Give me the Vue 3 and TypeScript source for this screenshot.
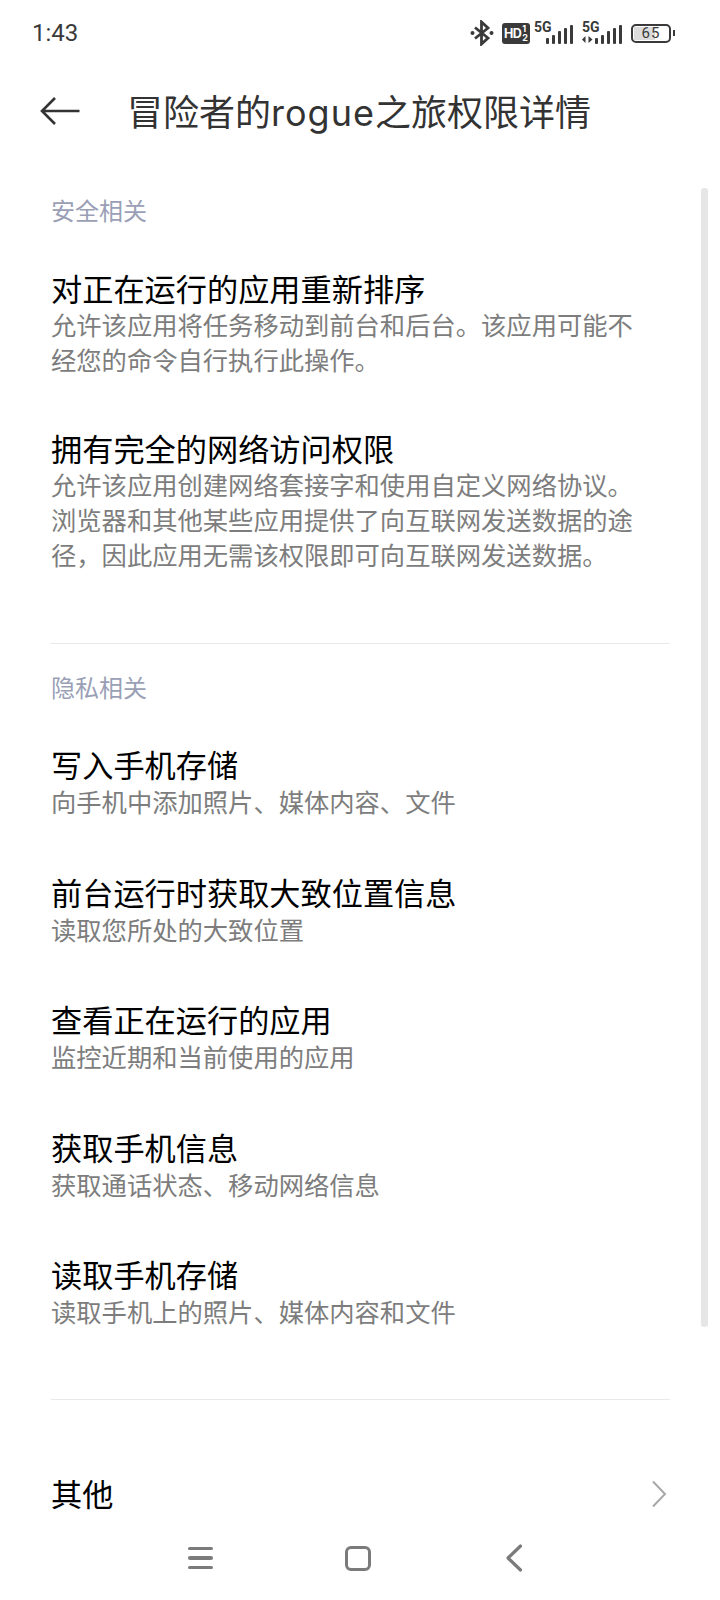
<script setup lang="ts">
interface Perm {
  title: string
  lines: string[]
}

const security: Perm[] = [
  {
    title: '对正在运行的应用重新排序',
    lines: ['允许该应用将任务移动到前台和后台。该应用可能不', '经您的命令自行执行此操作。']
  },
  {
    title: '拥有完全的网络访问权限',
    lines: [
      '允许该应用创建网络套接字和使用自定义网络协议。',
      '浏览器和其他某些应用提供了向互联网发送数据的途',
      '径，因此应用无需该权限即可向互联网发送数据。'
    ]
  }
]

const privacy: Perm[] = [
  { title: '写入手机存储', lines: ['向手机中添加照片、媒体内容、文件'] },
  { title: '前台运行时获取大致位置信息', lines: ['读取您所处的大致位置'] },
  { title: '查看正在运行的应用', lines: ['监控近期和当前使用的应用'] },
  { title: '获取手机信息', lines: ['获取通话状态、移动网络信息'] },
  { title: '读取手机存储', lines: ['读取手机上的照片、媒体内容和文件'] }
]

const bars = [6, 9, 13, 16, 19]
</script>

<template>
  <div class="page">
    <div class="status">
      <span class="time">1:43</span>
      <div class="status-icons">
        <svg class="bt" width="24" height="26" viewBox="0 0 24 26" fill="none" stroke="#3a3a3a" stroke-width="2.8">
          <path d="M5 7.5 L18 18 L11.5 24 V2 L18 8 L5 18.5" />
          <circle cx="2.5" cy="13" r="2" fill="#3a3a3a" stroke="none" />
          <circle cx="21.5" cy="13" r="2" fill="#3a3a3a" stroke="none" />
        </svg>
        <div class="hd">
          <span class="hd-text">HD</span>
          <span class="hd-sub"><i>1</i><i>2</i></span>
        </div>
        <div class="net">
          <span class="five">5G</span>
          <div class="signal">
            <i v-for="h in bars" :key="h" :style="{ height: h + 'px' }"></i>
          </div>
        </div>
        <div class="net second">
          <span class="five">5G</span>
          <svg class="arrows" width="11" height="7" viewBox="0 0 11 7" fill="#3a3a3a">
            <path d="M0 3.5 L3.5 0 V7 Z M6.5 0 L10.5 3.5 L6.5 7 Z" />
          </svg>
          <div class="signal">
            <i v-for="h in bars" :key="h" :style="{ height: h + 'px' }"></i>
          </div>
        </div>
        <div class="battery">
          <div class="battery-body">
            <span class="battery-fill"></span>
            <span class="battery-num">65</span>
          </div>
          <span class="battery-nub"></span>
        </div>
      </div>
    </div>

    <div class="header">
      <svg class="back" width="40" height="30" viewBox="0 0 40 30" fill="none" stroke="#333" stroke-width="2.6">
        <path d="M39.5 15 H2.5 M15 2 L2 15 L15 28" />
      </svg>
      <h1 class="title">冒险者的<span class="latin">rogue</span>之旅权限详情</h1>
    </div>

    <div class="content">
      <section class="group first">
        <div class="label">安全相关</div>
        <div v-for="p in security" :key="p.title" class="perm">
          <div class="perm-title">{{ p.title }}</div>
          <div v-for="l in p.lines" :key="l" class="perm-desc">{{ l }}</div>
        </div>
      </section>

      <div class="divider one"></div>

      <section class="group">
        <div class="label">隐私相关</div>
        <div v-for="p in privacy" :key="p.title" class="perm">
          <div class="perm-title">{{ p.title }}</div>
          <div v-for="l in p.lines" :key="l" class="perm-desc">{{ l }}</div>
        </div>
      </section>

      <div class="divider two"></div>

      <div class="other">
        <span class="perm-title">其他</span>
        <svg width="16" height="28" viewBox="0 0 16 28" fill="none" stroke="#a8a8a8" stroke-width="2">
          <path d="M2 1.5 L14 14 L2 26.5" />
        </svg>
      </div>
    </div>

    <div class="scrollbar"></div>

    <div class="navbar">
      <div class="nav-menu"><i></i><i></i><i></i></div>
      <div class="nav-home"></div>
      <svg width="18" height="28" viewBox="0 0 18 28" fill="none" stroke="#7b7b7b" stroke-width="3.2" stroke-linecap="round" stroke-linejoin="round">
        <path d="M15.5 2 L3 14 L15.5 26" />
      </svg>
    </div>
  </div>
</template>

<style scoped>
.page {
  position: relative;
  width: 720px;
  height: 1600px;
  overflow: hidden;
  background: #fff;
  display: flex;
  flex-direction: column;
  font-family: Roboto, "Noto Sans CJK SC", sans-serif;
}

.status {
  height: 66px;
  flex: none;
  display: flex;
  align-items: center;
  justify-content: space-between;
  padding: 0 45px 0 32px;
  color: #3a3a3a;
}
.time {
  font-family: Roboto, sans-serif;
  font-size: 24px;
  font-weight: 400;
}
.status-icons {
  display: flex;
  align-items: center;
}
.bt {
  margin-right: 8px;
}
.hd {
  width: 28px;
  height: 21px;
  border-radius: 3px;
  background: #3a3a3a;
  color: #fff;
  display: flex;
  align-items: center;
  justify-content: center;
  margin-right: 4px;
  font-family: Inter, sans-serif;
  font-weight: 700;
}
.hd-text {
  font-size: 12.5px;
  letter-spacing: -0.5px;
}
.hd-sub {
  display: flex;
  flex-direction: column;
  font-size: 9px;
  line-height: 9px;
  margin-left: 1px;
}
.hd-sub i {
  font-style: normal;
}
.net {
  position: relative;
  width: 39px;
  height: 22px;
  display: flex;
  justify-content: flex-end;
  align-items: flex-end;
  margin-right: 9px;
}
.net.second {
  width: 40px;
}
.five {
  position: absolute;
  left: 0;
  top: -1px;
  font-family: Roboto, sans-serif;
  font-size: 14px;
  line-height: 13px;
  font-weight: 700;
}
.arrows {
  position: absolute;
  left: 0;
  bottom: 1px;
}
.signal {
  display: flex;
  align-items: flex-end;
  gap: 2.5px;
}
.signal i {
  display: block;
  width: 3.5px;
  background: #3a3a3a;
  border-radius: 1px;
}
.battery {
  display: flex;
  align-items: center;
  gap: 2px;
}
.battery-body {
  position: relative;
  width: 40px;
  height: 19px;
  box-sizing: border-box;
  border: 2px solid #3a3a3a;
  border-radius: 5px;
  overflow: hidden;
  display: flex;
  align-items: center;
  justify-content: center;
}
.battery-fill {
  position: absolute;
  left: 1px;
  top: 1px;
  bottom: 1px;
  width: 21px;
  background: #dcdcdc;
}
.battery-num {
  position: relative;
  font-family: Roboto, sans-serif;
  font-size: 15px;
  line-height: 14px;
  letter-spacing: 1px;
  color: #3a3a3a;
}
.battery-nub {
  width: 2px;
  height: 6px;
  background: #3a3a3a;
}

.header {
  flex: none;
  height: 90px;
  display: flex;
  align-items: center;
  padding-left: 40px;
}
.back {
  flex: none;
}
.title {
  margin: 0 0 0 47px;
  padding-top: 4px;
  font-size: 36px;
  font-weight: 400;
  line-height: 46px;
  color: #333;
  white-space: nowrap;
}
.latin {
  font-family: Inter, sans-serif;
  letter-spacing: 1px;
}

.content {
  flex: 1;
  padding: 0 50px 0 51px;
}
.group {
  padding-top: 28px;
}
.group.first {
  padding-top: 39px;
}
.label {
  font-size: 24px;
  line-height: 34px;
  color: #9a9fb6;
}
.perm {
  margin-top: 38px;
}
.group .perm + .perm {
  margin-top: 50.5px;
}
.group.first .perm {
  margin-top: 41px;
}
.group.first .perm + .perm {
  margin-top: 51px;
}
.perm-title {
  padding-top: 4px;
  font-size: 31.2px;
  line-height: 38px;
  color: #000;
  white-space: nowrap;
}
.group.first .perm-title {
  padding-top: 3px;
  line-height: 36px;
}
.other .perm-title {
  line-height: 40px;
}
.perm-desc {
  font-size: 25.3px;
  line-height: 35px;
  color: #7d7d7d;
  white-space: nowrap;
}
.divider {
  height: 1px;
  background: #e9e9e9;
}
.divider.one {
  margin-top: 69px;
  margin-left: -1px;
}
.divider.two {
  margin-top: 68px;
}
.other {
  margin-top: 72px;
  padding-right: 3px;
  display: flex;
  align-items: center;
  justify-content: space-between;
}

.scrollbar {
  position: absolute;
  left: 701px;
  top: 188px;
  width: 7px;
  height: 1139px;
  background: #e6e6e6;
  border-radius: 3px;
}

.navbar {
  position: absolute;
  left: 188px;
  bottom: 23px;
  height: 38px;
  display: flex;
  align-items: center;
}
.nav-menu {
  display: flex;
  flex-direction: column;
  gap: 6px;
  width: 25px;
  margin-right: 132px;
}
.nav-menu i {
  display: block;
  height: 3.5px;
  background: #7b7b7b;
  border-radius: 2px;
}
.nav-home {
  width: 26px;
  height: 25px;
  box-sizing: border-box;
  border: 3px solid #7b7b7b;
  border-radius: 6px;
  margin-right: 134px;
}
</style>
